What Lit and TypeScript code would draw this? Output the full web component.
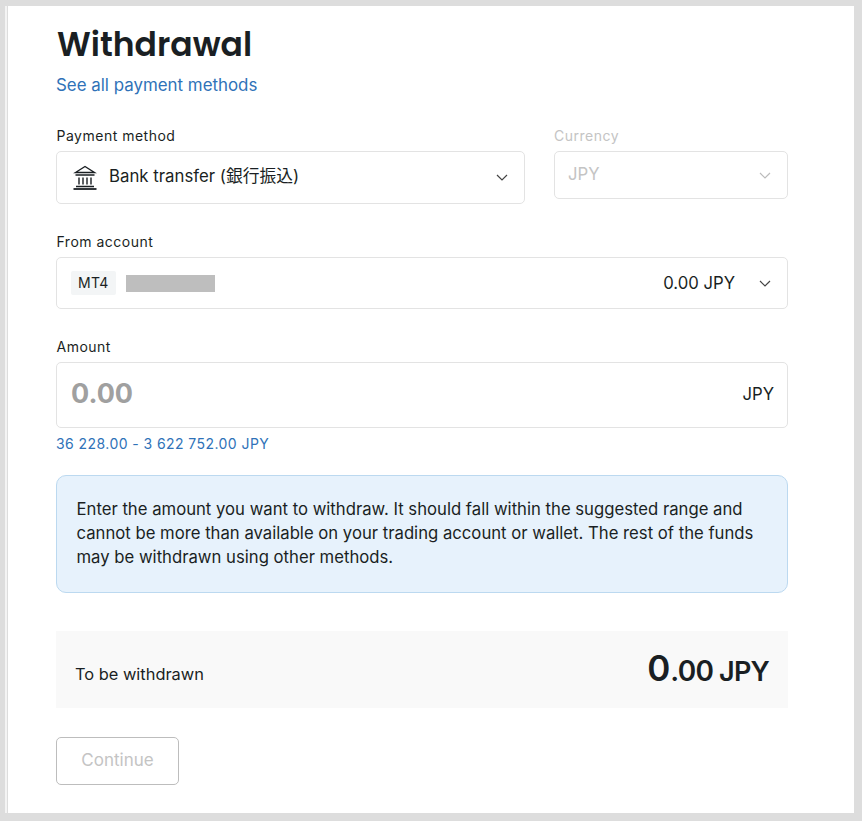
import { LitElement, html, css, svg } from "lit";
import { customElement } from "lit/decorators.js";

const chevron = svg`<path d="M1 1l5 5 5-5" fill="none" stroke="currentColor" stroke-width="1.2"/>`;

@customElement("app-root")
export class AppRoot extends LitElement {
  static styles = css`
    :host { display: block; width: 862px; height: 821px; box-sizing: border-box; background: #dddddd; padding: 6px 8px 8px 5px; font-family: Inter, "Noto Sans CJK JP", sans-serif; color: #1a1f23; overflow: hidden; }
    .page { height: 100%; box-sizing: border-box; background: #fff; border-left: 2px solid #f4f4f4; box-shadow: inset 1px 0 0 #dddddd; padding: 0 0 0 49px; width: 849px; }
    .content { width: 732px; display: flex; flex-direction: column; }
    h1 { margin: 0; font-family: Poppins, Inter, sans-serif; font-weight: 600; font-size: 33px; line-height: 40px; letter-spacing: 0; padding: 19px 0 0 1px; }
    .link { color: #2f72b8; font-size: 16.9px; line-height: 24px; margin-top: 8px; }
    .row { display: flex; gap: 29px; margin-top: 29px; align-items: flex-start; }
    .field { display: flex; flex-direction: column; }
    .label { font-size: 14px; line-height: 20px; letter-spacing: 0.5px; margin-bottom: 5px; padding-left: 0.5px; }
    .box { border: 1px solid #e3e3e3; border-radius: 5px; box-sizing: border-box; display: flex; align-items: center; font-size: 16.7px; }
    .method { width: 469px; height: 53px; padding: 0 16px 0 16px; gap: 12px; }
    .method-text { font-size: 16.8px; padding-bottom: 6px; }
    .currency { width: 234px; height: 48px; padding: 0 16px 0 13px; justify-content: space-between; color: #c4c4c4; }
    .currency-text { padding-bottom: 2px; }
    .disabled { color: #c4c4c4; padding-left: 0; }
    .grow { flex: 1; }
    .chev { width: 12px; height: 7px; color: #444; flex: none; }
    .currency .chev { color: #bbb; }
    .icon { margin-top: 1px; flex: none; }
    .account { height: 52px; padding: 0 16px 0 14px; }
    .tag { background: #f3f5f6; font-size: 14px; line-height: 24px; padding: 0 7px; border-radius: 2px; letter-spacing: 0.3px; }
    .mask { width: 89px; height: 17px; background: #bebebe; margin-left: 10px; }
    .bal { margin-right: 24px; font-size: 16.7px; }
    .amount { height: 66px; padding: 0 13px 0 14px; }
    .zero { color: #a0a0a0; font-size: 27px; font-weight: 700; padding-bottom: 4px; }
    .unit { padding-bottom: 2px; }
    .range { color: #2f72b8; font-size: 14px; line-height: 20px; margin-top: 6px; letter-spacing: 0.43px; }
    .note { margin-top: 21px; height: 118px; box-sizing: border-box; background: #e7f2fc; border: 1px solid #bcd9f0; border-radius: 10px; padding: 21px 19.500px; font-size: 16.7px; line-height: 24px; }
    .total { margin-top: 38px; height: 77px; background: #f9f9f9; display: flex; align-items: center; justify-content: space-between; padding: 0 19px; font-size: 16.4px; }
    .total-label { padding-top: 8px; }
    .sum { font-weight: 600; font-size: 28px; display: flex; align-items: baseline; padding-bottom: 4px; }
    .sum b { font-size: 35px; font-weight: 600; }
    .decimals { letter-spacing: -0.8px; }
    .cur { margin-left: 6px; font-size: 27px; letter-spacing: -0.8px; }
    button { margin-top: 29px; width: 123px; height: 48px; padding: 0 0 2px; background: #fff; border: 1px solid #bdbdbd; border-radius: 5px; color: #c4c4c4; font: inherit; font-size: 17px; }
  `;

  private chev() {
    return html`<svg class="chev" viewBox="0 0 12 7">${chevron}</svg>`;
  }

  render() {
    return html`<div class="page"><div class="content">
      <h1>Withdrawal</h1>
      <div class="link">See all payment methods</div>
      <div class="row">
        <div class="field">
          <div class="label">Payment method</div>
          <div class="box method">
            <svg class="icon" width="24" height="26" viewBox="0 0 24 26" fill="none" stroke="#1a1f23" stroke-width="1.4">
              <path d="M2.500 7.500 12 1.500l9.500 6zM2.500 10h19M6 12.500v7M10 12.500v7M14 12.500v7M18 12.500v7M3 21.500h18" />
              <path d="M0.500 24h23" stroke-width="1.800" />
            </svg>
            <span class="method-text">Bank transfer (銀行振込)</span>
            <span class="grow"></span>
            ${this.chev()}
          </div>
        </div>
        <div class="field">
          <div class="label disabled">Currency</div>
          <div class="box currency"><span class="currency-text">JPY</span>${this.chev()}</div>
        </div>
      </div>
      <div class="field" style="margin-top:28px">
        <div class="label">From account</div>
        <div class="box account">
          <span class="tag">MT4</span><span class="mask"></span>
          <span class="grow"></span>
          <span class="bal">0.00 JPY</span>${this.chev()}
        </div>
      </div>
      <div class="field" style="margin-top:28px">
        <div class="label">Amount</div>
        <div class="box amount"><span class="zero">0.00</span><span class="grow"></span><span class="unit">JPY</span></div>
      </div>
      <div class="range">36 228.00 - 3 622 752.00 JPY</div>
      <div class="note">Enter the amount you want to withdraw. It should fall within the suggested range and cannot be more than available on your trading account or wallet. The rest of the funds may be withdrawn using other methods.</div>
      <div class="total"><span class="total-label">To be withdrawn</span><div class="sum"><b>0</b><span class="decimals">.00</span><span class="cur">JPY</span></div></div>
      <div><button>Continue</button></div>
    </div></div>`;
  }
}
